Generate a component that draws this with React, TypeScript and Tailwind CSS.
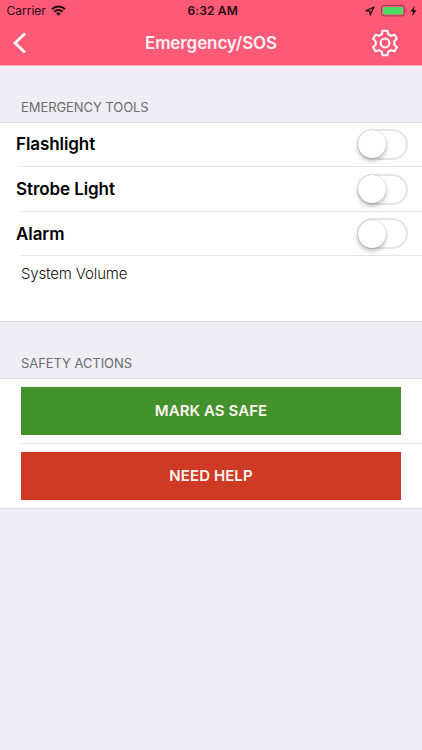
import type { ReactNode } from 'react';

function Switch() {
  return (
    <div className="flex h-[31px] w-[51px] items-center rounded-full border-2 border-[#e5e5e5] bg-white">
      <div className="-ml-px size-[28px] shrink-0 rounded-full bg-white shadow-[0_3px_5px_rgba(0,0,0,0.26),0_0_1px_rgba(0,0,0,0.25)]" />
    </div>
  );
}

function ToggleRow({ label }: { label: string }) {
  return (
    <div className="h-[44.7px]">
      <div className="flex h-[43.4px] items-center justify-between pr-[14px] pl-[16px]">
        <span className="pt-[1.4px] text-[17px] font-semibold tracking-[-0.08px] text-black">{label}</span>
        <Switch />
      </div>
      <div className="ml-[21px] h-px bg-[#e4e4e6]" />
    </div>
  );
}

function SectionTitle({ children }: { children: ReactNode }) {
  return (
    <div className="flex h-[57px] items-end border-b border-[#dcdbe0] pb-[6px] pl-[21px] text-[13px] leading-[18px] tracking-[-0.07px] text-[#6d6d72]">
      {children}
    </div>
  );
}

function StatusBar() {
  return (
    <div className="grid h-[22px] grid-cols-3 items-center pr-[5px] pl-[6.5px] text-[12px] text-[#2b0b12]">
      <div className="flex items-center gap-[5.5px]">
        <span>Carrier</span>
        <svg className="-mt-px" width="15" height="11" viewBox="0 0 15 11" fill="none" stroke="#1d060b" strokeWidth="2.1">
          <path d="M1 4.2a9.3 9.3 0 0 1 13 0" />
          <path d="M3.4 6.7a5.9 5.9 0 0 1 8.2 0" />
          <path d="M7.5 10.7 5.2 8.4a3.3 3.3 0 0 1 4.6 0Z" fill="#1d060b" stroke="none" />
        </svg>
      </div>
      <span className="pl-[2px] text-center font-semibold tracking-[0.15px]">6:32 AM</span>
      <div className="flex items-center justify-end">
        <svg width="10" height="10" viewBox="0 0 10 10" fill="none" stroke="#2b0b12" strokeWidth="1.3" strokeLinejoin="round">
          <path d="M9 1 1 4.8l3.8.4L5.2 9Z" />
        </svg>
        <svg className="ml-[6px]" width="27" height="12" viewBox="0 0 27 12">
          <rect x=".6" y=".6" width="22.8" height="10.3" rx="2.4" fill="none" stroke="#9b3a4b" />
          <rect x="2" y="2" width="20" height="7.6" rx="1.1" fill="#4cd964" />
          <path d="M24.6 4v3.6c1.4-.5 1.4-3.1 0-3.6Z" fill="#9b3a4b" />
        </svg>
        <svg className="ml-[2px]" width="7" height="10" viewBox="0 0 7 10" fill="#1d060b">
          <path d="M4.7 0 .4 5.5h2.7L2.1 10l4.5-5.8H3.8Z" />
        </svg>
      </div>
    </div>
  );
}

function Gear() {
  return (
    <svg width="28" height="28" viewBox="-14 -14 28 28" fill="none" stroke="white" strokeWidth="2" strokeLinejoin="round">
      <circle r="4.4" />
      <path d="M-2.4-12.3h4.8l.8 3.6q1.5.6 2.8 1.6l3.5-1.2 2.4 4.1-2.7 2.6q.3 1.6 0 3.2l2.7 2.6-2.4 4.1-3.5-1.2q-1.3 1-2.8 1.6l-.8 3.6h-4.8l-.8-3.6q-1.5-.6-2.8-1.6l-3.5 1.2-2.4-4.1 2.7-2.6q-.3-1.6 0-3.2l-2.7-2.6 2.4-4.1 3.5 1.2q1.3-1 2.8-1.6Z" />
    </svg>
  );
}

export default function App() {
  return (
    <div className="flex h-[750px] w-[422px] flex-col overflow-hidden bg-[#efeef4] font-['Inter','Liberation_Sans',sans-serif]">
      <header className="h-[66px] shrink-0 border-b border-[#fba9b9] bg-[#fd5a78]">
        <StatusBar />
        <div className="grid h-[43px] grid-cols-[60px_1fr_60px] items-center">
          <svg className="-mt-px ml-[12px]" width="16" height="24" viewBox="0 0 16 24" fill="none" stroke="white" strokeWidth="2.8">
            <path d="M13 2.5 3 12l10 9.5" />
          </svg>
          <h1 className="text-center text-[17px] font-semibold tracking-[-0.1px] text-[#fff0f3]">Emergency/SOS</h1>
          <div className="-mt-[2px] ml-[9px]"><Gear /></div>
        </div>
      </header>

      <SectionTitle>EMERGENCY TOOLS</SectionTitle>
      <section className="h-[199px] border-b border-[#dcdbe0] bg-white">
        <div className="-mt-[0.3px]">
          <ToggleRow label="Flashlight" />
          <ToggleRow label="Strobe Light" />
          <ToggleRow label="Alarm" />
        </div>
        <div className="pt-[6px] pl-[21px] text-[15px] leading-[22px] font-light tracking-[-0.15px] text-[#111111]">System Volume</div>
      </section>

      <SectionTitle>SAFETY ACTIONS</SectionTitle>
      <section className="h-[130px] border-b border-[#dcdbe0] bg-white pt-[8px] text-[15px] font-semibold tracking-[0.08px] text-[#fff5f0]">
        <button className="mx-[21px] flex h-[48px] w-[380px] items-center justify-center bg-[#43922d]">MARK AS SAFE</button>
        <div className="mt-[8px] mb-[8px] ml-[21px] h-px bg-[#e4e4e6]" />
        <button className="mx-[21px] flex h-[48px] w-[380px] items-center justify-center bg-[#cf3a24]">NEED HELP</button>
      </section>
    </div>
  );
}
